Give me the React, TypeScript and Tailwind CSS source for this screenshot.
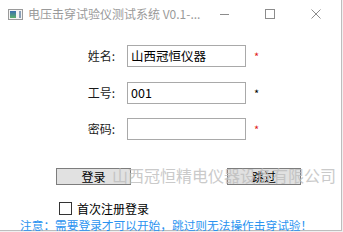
import React from "react";

const font = { fontFamily: '"Noto Sans CJK SC", "Microsoft YaHei", sans-serif' };

const AppIcon = () => (
  <svg width="15" height="11" viewBox="0 0 15 11">
    <defs>
      <linearGradient id="g1" x1="0" y1="0" x2="0" y2="1">
        <stop offset="0" stopColor="#3a6fb0" />
        <stop offset="1" stopColor="#5bb06a" />
      </linearGradient>
    </defs>
    <rect x="0.5" y="0.5" width="14" height="10" fill="#f4f4f4" stroke="#9a9a9a" />
    <rect x="2" y="2" width="6" height="7" fill="url(#g1)" />
    <rect x="11" y="2" width="2" height="7" fill="#8aa0b8" />
  </svg>
);

const Field = ({
  label,
  value,
  starColor,
}: {
  label: string;
  value: string;
  starColor: string;
}) => (
  <div className="flex items-center h-[22px]">
    <div className="w-[116px] text-right text-[12px] text-[#1a1a1a] pr-[1px]">{label}</div>
    <div className="ml-[11px] w-[119px] h-[22px] border border-[#a9a9a9] bg-white flex items-center pl-[3px] text-[12.5px] text-black">
      {value}
    </div>
    <span className={`ml-[8px] text-[11px] leading-none ${starColor}`}>*</span>
  </div>
);

export default function App() {
  return (
    <div className="w-[343px] h-[232px] bg-[#f0f0f0] overflow-hidden" style={font}>
      <div className="relative w-[342px] h-[231px] bg-white border-r border-b border-[#bdbdbd]">
        {/* title bar */}
        <div className="flex items-center h-[28px]">
          <div className="ml-[8px] flex items-center">
            <AppIcon />
          </div>
          <span className="ml-[5px] text-[12px] text-[#9a9a9a] whitespace-nowrap">
            电压击穿试验仪测试系统 V0.1-...
          </span>
          <div className="ml-auto flex items-center text-[#8c8c8c]">
            <div className="w-[46px] flex justify-center">
              <div className="w-[9px] h-px bg-[#8c8c8c]" />
            </div>
            <div className="w-[46px] flex justify-center">
              <div className="w-[10px] h-[10px] border border-[#8c8c8c]" />
            </div>
            <div className="w-[46px] flex justify-center mr-[2px]">
              <svg width="10" height="10" viewBox="0 0 10 10">
                <path d="M0.5 0.5L9.5 9.5M9.5 0.5L0.5 9.5" stroke="#8c8c8c" strokeWidth="1" />
              </svg>
            </div>
          </div>
        </div>

        {/* form */}
        <div className="mt-[17px] flex flex-col">
          <Field label="姓名:" value="山西冠恒仪器" starColor="text-[#e02020]" />
          <div className="mt-[15px]">
            <Field label="工号:" value="001" starColor="text-black" />
          </div>
          <div className="mt-[14px]">
            <Field label="密码:" value="" starColor="text-[#e02020]" />
          </div>
        </div>

        {/* buttons */}
        <div className="mt-[28px] flex items-center">
          <button className="ml-[56px] w-[75px] h-[17px] bg-[#e1e1e1] border border-[#7d7d7d] text-[12px] leading-none text-black flex items-center justify-center">
            登录
          </button>
          <button className="ml-[96px] w-[74px] h-[17px] bg-[#e1e1e1] border border-[#7d7d7d] text-[12px] leading-none text-black flex items-center justify-center">
            跳过
          </button>
        </div>

        {/* checkbox */}
        <div className="mt-[17px] flex items-center ml-[59px]">
          <div className="w-[13px] h-[13px] border border-[#333] bg-white" />
          <span className="ml-[5px] text-[12px] text-black leading-none">首次注册登录</span>
        </div>

        <div className="mt-[3px] ml-[20px] text-[11.7px] leading-[14px] text-[#2a93f0] whitespace-nowrap">
          注意：需要登录才可以开始，跳过则无法操作击穿试验！
        </div>

        {/* watermark */}
        <div className="absolute left-[112px] top-[165px] text-[16px] leading-[20px] text-[#bdbdbd] opacity-80 whitespace-nowrap pointer-events-none">
          山西冠恒精电仪器设备有限公司
        </div>
      </div>
    </div>
  );
}
